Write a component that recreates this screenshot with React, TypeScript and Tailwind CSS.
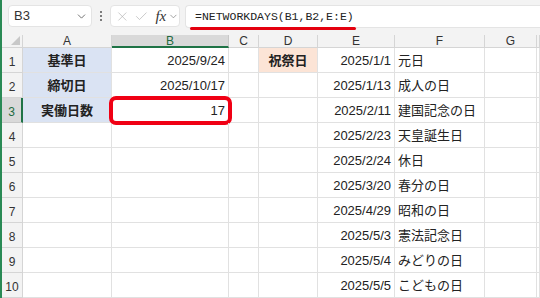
import React from 'react';
import { X, Check, ChevronDown } from 'lucide-react';

const cols = ['A', 'B', 'C', 'D', 'E', 'F', 'G', ''];

const holidays: [string, string][] = [
  ['2025/1/1', '元日'],
  ['2025/1/13', '成人の日'],
  ['2025/2/11', '建国記念の日'],
  ['2025/2/23', '天皇誕生日'],
  ['2025/2/24', '休日'],
  ['2025/3/20', '春分の日'],
  ['2025/4/29', '昭和の日'],
  ['2025/5/3', '憲法記念日'],
  ['2025/5/4', 'みどりの日'],
  ['2025/5/5', 'こどもの日'],
];

const labels = ['基準日', '締切日', '実働日数'];
const values = ['2025/9/24', '2025/10/17', '17'];

const cell = 'border-r border-b border-[#e1e1e1] h-[25px] flex items-end pb-[2px] text-[13px] text-[#222] whitespace-nowrap';

const App: React.FC = () => {
  return (
    <div
      className="w-[540px] h-[298px] overflow-hidden bg-white flex flex-col border-l-2 border-[#2a8a55]"
      style={{ fontFamily: '"Liberation Sans", "Noto Sans CJK JP", sans-serif' }}
    >
      {/* formula bar */}
      <div className="h-[35px] bg-[#f3f3f3] flex items-start pt-[5px] pl-[6px]">
        <div className="w-[84px] h-[22px] bg-white rounded-[4px] border border-[#e4e4e4] flex items-center justify-between pl-[5px] pr-[3px]">
          <span className="text-[13px] text-[#333]">B3</span>
          <ChevronDown size={13} strokeWidth={1.5} className="text-[#555]" />
        </div>
        <div className="w-[18px] h-[22px] flex flex-col items-center justify-center gap-[2px]">
          <span className="w-[2px] h-[2px] bg-[#555] rounded-full" />
          <span className="w-[2px] h-[2px] bg-[#555] rounded-full" />
          <span className="w-[2px] h-[2px] bg-[#555] rounded-full" />
        </div>
        <div className="w-[70px] h-[22px] bg-white rounded-[4px] border border-[#e4e4e4] flex items-center pl-[4px] gap-[2px]">
          <X size={15} strokeWidth={1} className="text-[#aaa]" />
          <Check size={15} strokeWidth={1} className="text-[#aaa] ml-[2px]" />
          <span
            className="italic text-[15px] text-[#333] ml-[5px] leading-none"
            style={{ fontFamily: '"Liberation Serif", serif' }}
          >
            fx
          </span>
          <ChevronDown size={11} strokeWidth={1.5} className="text-[#777]" />
        </div>
        <div className="flex-1 ml-[5px] h-[23px] bg-white rounded-l-[4px] border border-r-0 border-[#e4e4e4] flex items-center pl-[9px]">
          <span
            className="relative text-[11.5px] text-[#222] leading-none"
            style={{ fontFamily: '"Liberation Mono", monospace' }}
          >
            =NETWORKDAYS(B1,B2,E:E)
            <span className="absolute -left-[5px] -right-[2px] -bottom-[8px] h-[3px] bg-[#e4000f] rounded-full" />
          </span>
        </div>
      </div>

      {/* grid */}
      <div className="grid grid-cols-[21px_89px_117px_30px_59px_77px_90px_52px_1fr]">
        <div className="h-[13px] bg-[#f3f3f3] border-r border-b border-[#d5d5d5] relative">
          <div className="absolute right-[2px] bottom-[2px] w-0 h-0 border-l-[9px] border-l-transparent border-b-[9px] border-b-[#c8c8c8]" />
        </div>
        {cols.map((c) => (
          <div
            key={c || 'end'}
            className={
              c === 'B'
                ? 'h-[13px] bg-[#d9d9d9] border-r border-[#c8c8c8] border-b-2 border-b-[#1f7346] flex items-center justify-center text-[12px] text-[#1f6b3f] leading-none'
                : 'h-[13px] bg-[#f3f3f3] border-r border-b border-[#d5d5d5] flex items-center justify-center text-[12px] text-[#333] leading-none'
            }
          >
            {c}
          </div>
        ))}

        {holidays.map(([date, name], i) => (
          <React.Fragment key={date}>
            <div
              className={
                i === 2
                  ? 'h-[25px] bg-[#d9d9d9] border-r-2 border-r-[#1f7346] border-b border-[#c8c8c8] flex items-end justify-center pb-[1px] text-[12px] text-[#1f6b3f]'
                  : 'h-[25px] bg-[#f3f3f3] border-r border-b border-[#d5d5d5] flex items-end justify-center pb-[1px] text-[12px] text-[#333]'
              }
            >
              {i + 1}
            </div>
            <div className={`${cell} justify-center font-bold ${i < 3 ? 'bg-[#dae3f3]' : ''}`}>
              {labels[i] ?? ''}
            </div>
            <div className={`${cell} justify-end pr-[3px] relative`}>
              {values[i] ?? ''}
              {i === 2 && (
                <div className="absolute -left-[3px] -right-[4px] -top-[2px] -bottom-[3px] border-4 border-[#f00014] rounded-[7px]" />
              )}
            </div>
            <div className={cell} />
            <div className={`${cell} justify-center font-bold ${i === 0 ? 'bg-[#fce4d6]' : ''}`}>
              {i === 0 ? '祝祭日' : ''}
            </div>
            <div className={`${cell} justify-end pr-[3px]`}>{date}</div>
            <div className={`${cell} pl-[3px]`}>{name}</div>
            <div className={cell} />
            <div className={cell} />
          </React.Fragment>
        ))}
      </div>
    </div>
  );
};

export default App;
